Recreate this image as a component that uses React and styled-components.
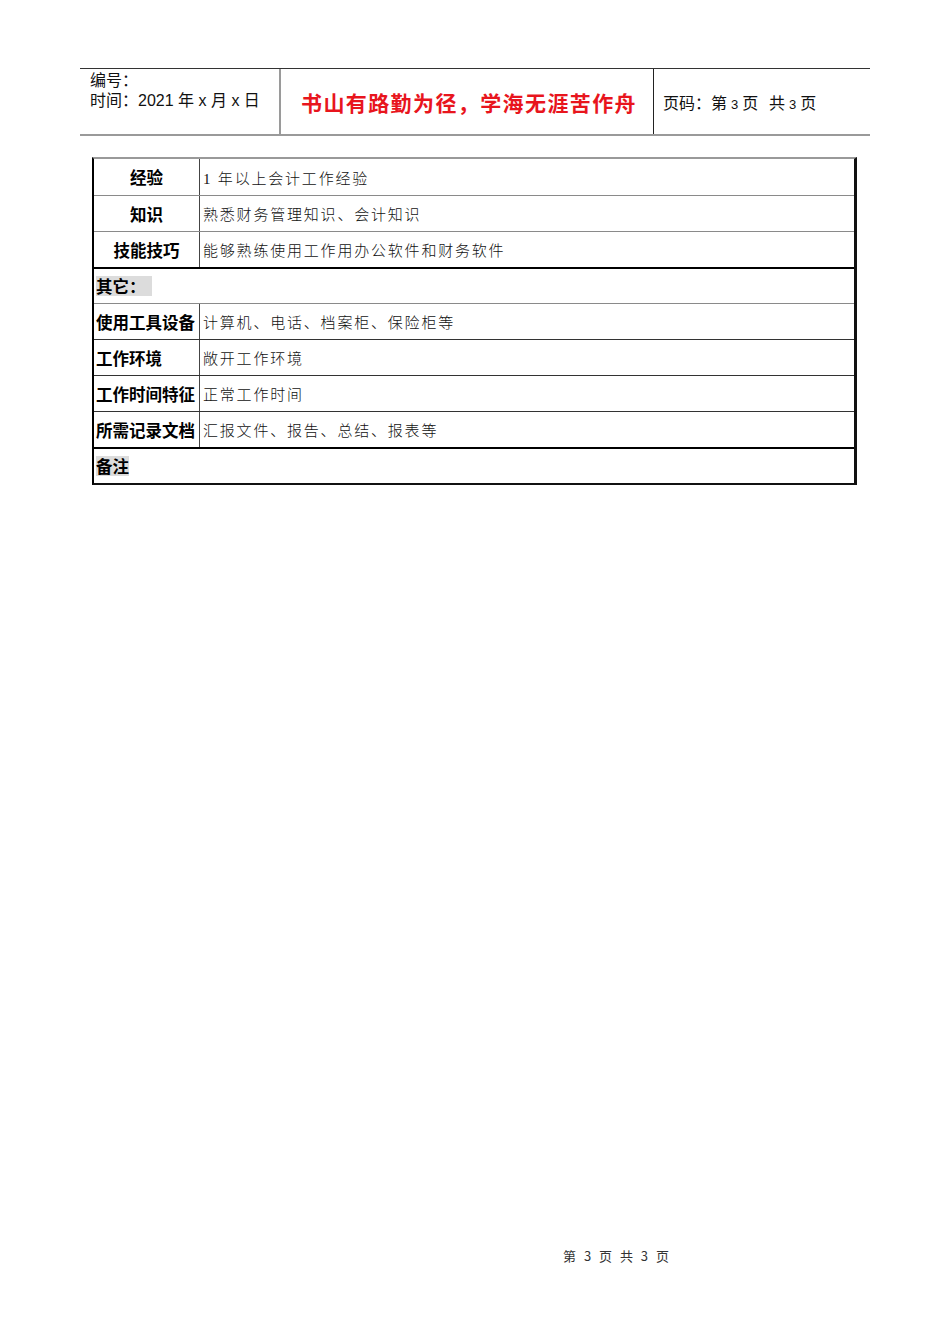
import React from 'react'
import styled, { createGlobalStyle } from 'styled-components'

const GlobalStyle = createGlobalStyle`
  html, body {
    margin: 0;
    padding: 0;
    background: #fff;
  }
  body {
    font-family: "Liberation Sans", "Noto Sans CJK SC", sans-serif;
    color: #000;
  }
`

const Page = styled.div`
  width: 950px;
  height: 1344px;
  padding-top: 68px;
  box-sizing: border-box;
  display: flex;
  flex-direction: column;
  align-items: flex-start;
`

const Header = styled.div`
  margin-left: 80px;
  width: 790px;
  height: 68px;
  box-sizing: border-box;
  border-top: 1px solid #333;
  border-bottom: 2px solid #9a9a9a;
  display: grid;
  grid-template-columns: 201px 373px 1fr;
`

const HeadCell = styled.div`
  box-sizing: border-box;
  border-right: ${p => p.$line || 'none'};
  display: flex;
  flex-direction: column;
  justify-content: ${p => (p.$top ? 'flex-start' : 'center')};
  padding: ${p => p.$pad || '0'};
  font-size: 16px;
  line-height: 20px;
  color: #111;
`

const Motto = styled.span`
  font-family: "Noto Sans CJK SC", sans-serif;
  font-weight: 700;
  font-size: 21px;
  letter-spacing: 1.4px;
  color: #e8151d;
  padding-left: 20px;
`

const PageNo = styled.span`
  font-family: "Noto Sans CJK SC", sans-serif;
  font-size: 16px;
  small {
    font-family: "Liberation Sans", sans-serif;
    font-size: 13px;
    margin: 0 4px;
  }
`

const Table = styled.div`
  margin-top: 21px;
  margin-left: 92px;
  width: 765px;
  box-sizing: border-box;
  border-top: 2px solid #999;
  border-left: 2px solid #000;
  border-right: 3px solid #111;
  border-bottom: 2px solid #111;
  display: flex;
  flex-direction: column;
`

const Row = styled.div`
  display: grid;
  grid-template-columns: ${p => (p.$full ? '1fr' : '106px 1fr')};
  height: 36px;
  box-sizing: border-box;
  border-top: ${p => p.$line || 'none'};
`

const Label = styled.div`
  display: flex;
  align-items: center;
  justify-content: ${p => (p.$center ? 'center' : 'flex-start')};
  padding-left: ${p => (p.$center ? '0' : '2px')};
  border-right: ${p => (p.$full ? 'none' : '1px solid #444')};
  font-family: "Noto Sans CJK SC", sans-serif;
  font-weight: 700;
  font-size: 16.5px;
  white-space: nowrap;
`

const Mark = styled.span`
  background: #dcdcdc;
  padding-right: ${p => p.$extra || '0'};
  line-height: 20px;
`

const Value = styled.div`
  display: flex;
  align-items: center;
  padding-left: 3px;
  font-family: "Liberation Serif", "Noto Sans CJK SC", serif;
  font-size: 15px;
  font-weight: 300;
  letter-spacing: 1.8px;
  color: #111;
`

const Footer = styled.div`
  margin-top: auto;
  margin-bottom: 79px;
  align-self: stretch;
  padding-left: 563px;
  font-family: "Noto Sans CJK SC", sans-serif;
  font-size: 13px;
  color: #333;
  word-spacing: 3px;
  letter-spacing: 1px;
`

const thin = '1px solid #8a8a8a'
const dark = '1px solid #333'
const thick = '2px solid #000'

const rows = [
  { label: '经验', value: '1 年以上会计工作经验', center: true },
  { label: '知识', value: '熟悉财务管理知识、会计知识', center: true, line: thin },
  { label: '技能技巧', value: '能够熟练使用工作用办公软件和财务软件', center: true, line: thin },
  { label: '其它：', full: true, line: thick, mark: '6px' },
  { label: '使用工具设备', value: '计算机、电话、档案柜、保险柜等', line: thin },
  { label: '工作环境', value: '敞开工作环境', line: dark },
  { label: '工作时间特征', value: '正常工作时间', line: dark },
  { label: '所需记录文档', value: '汇报文件、报告、总结、报表等', line: dark },
  { label: '备注', full: true, line: thick, mark: '0' },
]

export default function App() {
  return (
    <Page>
      <GlobalStyle />
      <Header>
        <HeadCell $top $pad="2px 0 0 10px" $line="2px solid #9a9a9a">
          <span>编号：</span>
          <span>时间：2021 年 x 月 x 日</span>
        </HeadCell>
        <HeadCell $line="1px solid #222">
          <Motto>书山有路勤为径，学海无涯苦作舟</Motto>
        </HeadCell>
        <HeadCell $pad="3px 0 0 9px">
          <PageNo>
            页码：第<small>3</small>页&nbsp;&nbsp;&nbsp;共<small>3</small>页
          </PageNo>
        </HeadCell>
      </Header>

      <Table>
        {rows.map((r, i) => (
          <Row key={i} $full={r.full} $line={r.line}>
            <Label $center={r.center} $full={r.full}>
              {r.mark !== undefined ? <Mark $extra={r.mark}>{r.label}</Mark> : r.label}
            </Label>
            {!r.full && <Value>{r.value}</Value>}
          </Row>
        ))}
      </Table>

      <Footer>第 3 页 共 3 页</Footer>
    </Page>
  )
}
